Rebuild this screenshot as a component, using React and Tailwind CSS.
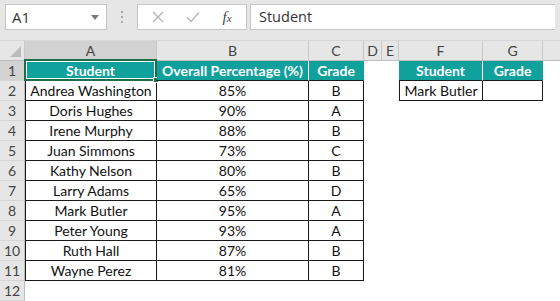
import React from "react";

const rows = [
  ["Andrea Washington", "85%", "B"],
  ["Doris Hughes", "90%", "A"],
  ["Irene Murphy", "88%", "B"],
  ["Juan Simmons", "73%", "C"],
  ["Kathy Nelson", "80%", "B"],
  ["Larry Adams", "65%", "D"],
  ["Mark Butler", "95%", "A"],
  ["Peter Young", "93%", "A"],
  ["Ruth Hall", "87%", "B"],
  ["Wayne Perez", "81%", "B"],
];

const cellFont = { fontFamily: "Lato, 'Liberation Sans', sans-serif" };

function RowHead({ n, active }) {
  return (
    <div
      className={
        "h-[20px] flex items-center justify-center border-r border-b border-r-[#bdbdbd] border-b-[#d4d4d4] text-[14px] text-[#444] " +
        (active ? "bg-[#d2d2d2]" : "bg-[#e6e6e6]")
      }
      style={cellFont}
    >
      {n}
    </div>
  );
}

function ColHead({ l, active, last }) {
  return (
    <div
      className={
        "h-[20px] flex items-center justify-center border-b border-b-[#bdbdbd] text-[14px] text-[#444] " +
        (last ? "" : "border-r border-r-[#c8c8c8] ") +
        (active ? "bg-[#d2d2d2]" : "bg-[#e6e6e6]")
      }
      style={cellFont}
    >
      {l}
    </div>
  );
}

function Teal({ children, left, last, sel }) {
  return (
    <div
      className={
        "relative h-[20px] flex items-center justify-center bg-[#10a19c] text-white font-bold text-[14px] border-b border-b-[#1a1a1a] border-r " +
        (last ? "border-r-[#10a19c] " : "border-r-white ") +
        (left ? "border-l border-l-[#1a1a1a]" : "")
      }
      style={cellFont}
    >
      {children}
      {sel && (
        <div className="absolute -top-[2px] -left-[1px] -right-[1px] -bottom-[1px] border-2 border-[#1f6e4a]">
          <div className="absolute inset-0 border border-white"></div>
          <div className="absolute -right-[4px] -bottom-[4px] w-[6px] h-[6px] bg-[#1f6e4a] border border-white"></div>
        </div>
      )}
    </div>
  );
}

function Data({ children, left }) {
  return (
    <div
      className={
        "h-[20px] flex items-center justify-center text-[14px] text-[#111] border-r border-b border-r-[#1a1a1a] border-b-[#1a1a1a] " +
        (left ? "border-l border-l-[#1a1a1a]" : "")
      }
      style={cellFont}
    >
      {children}
    </div>
  );
}

function Empty() {
  return <div className="h-[20px] bg-white"></div>;
}

export default function App() {
  return (
    <div className="w-[560px] h-[301px] overflow-hidden bg-white">
      {/* toolbar */}
      <div
        className="h-[40px] bg-[#e6e6e6] flex items-start pt-[4px] px-[5px] gap-0"
        style={{ fontFamily: "'Open Sans', 'Noto Sans', sans-serif" }}
      >
        <div className="w-[102px] h-[26px] bg-white border border-[#c6c6c6] flex items-center pl-[6px] pr-[7px] text-[15px] text-[#333]">
          <span className="flex-1">A1</span>
          <svg width="8" height="5" viewBox="0 0 8 5">
            <polygon points="0,0 8,0 4,5" fill="#7a7a7a" />
          </svg>
        </div>
        <div className="w-[30px] h-[26px] flex flex-col items-center justify-center gap-[3px]">
          <div className="w-[2px] h-[2px] bg-[#a8a8a8]"></div>
          <div className="w-[2px] h-[2px] bg-[#a8a8a8]"></div>
          <div className="w-[2px] h-[2px] bg-[#a8a8a8]"></div>
        </div>
        <div className="w-[110px] h-[26px] bg-white border border-[#c6c6c6] flex items-center">
          <div className="w-[40px] flex justify-center">
            <svg width="12" height="12" viewBox="0 0 12 12">
              <path d="M1 1 L11 11 M11 1 L1 11" stroke="#b4b4b4" strokeWidth="1.3" />
            </svg>
          </div>
          <div className="w-[30px] flex justify-center">
            <svg width="14" height="12" viewBox="0 0 14 12">
              <path d="M1 6.5 L5 10.5 L13 1.5" stroke="#b4b4b4" strokeWidth="1.3" fill="none" />
            </svg>
          </div>
          <div
            className="flex-1 flex justify-center text-[15px] italic text-[#444]"
            style={{ fontFamily: "'Liberation Serif', serif" }}
          >
            <span>f</span>
            <span className="text-[11px] mt-[4px]">x</span>
          </div>
        </div>
        <div className="ml-[3px] flex-1 h-[26px] bg-white border border-[#c6c6c6] border-r-0 flex items-center pl-[8px] text-[14.5px] text-[#333]">
          Student
        </div>
      </div>

      {/* sheet */}
      <div className="grid grid-cols-[25px_132px_152px_55px_18px_17px_84px_60px_1fr] border-t border-t-[#d6d6d6]">
        {/* column header row */}
        <div className="h-[20px] bg-[#e6e6e6] border-r border-b border-r-[#c8c8c8] border-b-[#bdbdbd] flex items-end justify-end pr-[3px] pb-[3px]">
          <svg width="11" height="11" viewBox="0 0 11 11">
            <polygon points="11,0 11,11 0,11" fill="#bcbcbc" />
          </svg>
        </div>
        <ColHead l="A" active />
        <ColHead l="B" />
        <ColHead l="C" />
        <ColHead l="D" />
        <ColHead l="E" />
        <ColHead l="F" />
        <ColHead l="G" />
        <ColHead l="" last />

        {/* row 1 */}
        <RowHead n="1" active />
        <Teal sel>Student</Teal>
        <Teal>Overall Percentage (%)</Teal>
        <Teal last>Grade</Teal>
        <Empty />
        <Empty />
        <Teal>Student</Teal>
        <Teal last>Grade</Teal>
        <Empty />

        {rows.map((r, i) => (
          <React.Fragment key={i}>
            <RowHead n={String(i + 2)} />
            <Data left>{r[0]}</Data>
            <Data>{r[1]}</Data>
            <Data>{r[2]}</Data>
            <Empty />
            <Empty />
            {i === 0 ? <Data left>Mark Butler</Data> : <Empty />}
            {i === 0 ? <Data></Data> : <Empty />}
            <Empty />
          </React.Fragment>
        ))}

        {/* row 12 */}
        <RowHead n="12" />
        <Empty />
        <Empty />
        <Empty />
        <Empty />
        <Empty />
        <Empty />
        <Empty />
        <Empty />
      </div>
    </div>
  );
}
